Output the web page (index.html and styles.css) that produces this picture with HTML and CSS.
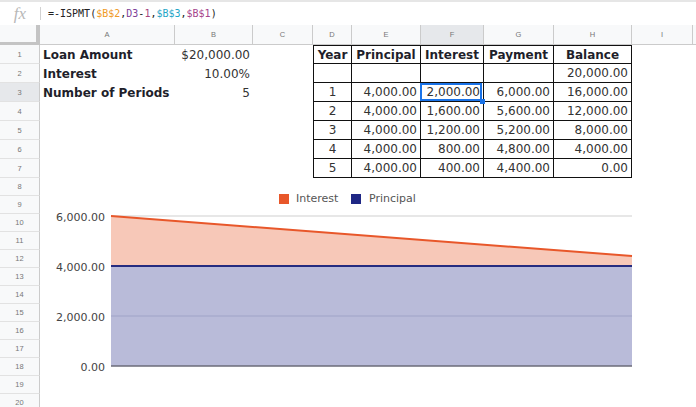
FILE: index.html
```html
<!DOCTYPE html>
<html>
<head>
<meta charset="utf-8">
<link rel="stylesheet" href="styles.css">
</head>
<body>
<div class="sheet">
  <div class="formula-bar">
    <div class="fx">fx</div>
    <div class="sep"></div>
    <div class="formula">=-ISPMT(<span class="ref1">$B$2</span>,<span class="ref2">D3</span>-<span class="num">1</span>,<span class="ref3">$B$3</span>,<span class="ref4">$B$1</span>)</div>
  </div>

  <div class="row head">
    <div class="corner"></div>
    <div>A</div><div>B</div><div>C</div><div>D</div><div>E</div>
    <div class="sel-h">F</div><div>G</div><div>H</div><div>I</div><div></div>
  </div>

  <div class="row">
    <div class="rh">1</div>
    <div class="b">Loan Amount</div>
    <div class="r">$20,000.00</div>
    <div></div>
    <div class="t first top b c">Year</div>
    <div class="t top b c">Principal</div>
    <div class="t top b c">Interest</div>
    <div class="t top b c">Payment</div>
    <div class="t top b c">Balance</div>
    <div></div><div></div>
  </div>

  <div class="row">
    <div class="rh">2</div>
    <div class="b">Interest</div>
    <div class="r">10.00%</div>
    <div></div>
    <div class="t first"></div>
    <div class="t"></div>
    <div class="t"></div>
    <div class="t"></div>
    <div class="t r">20,000.00</div>
    <div></div><div></div>
  </div>

  <div class="row">
    <div class="rh sel-h">3</div>
    <div class="b">Number of Periods</div>
    <div class="r">5</div>
    <div></div>
    <div class="t first c">1</div>
    <div class="t r">4,000.00</div>
    <div class="t r sel">2,000.00</div>
    <div class="t r">6,000.00</div>
    <div class="t r">16,000.00</div>
    <div></div><div></div>
  </div>

  <div class="row">
    <div class="rh">4</div>
    <div></div><div></div><div></div>
    <div class="t first c">2</div>
    <div class="t r">4,000.00</div>
    <div class="t r">1,600.00</div>
    <div class="t r">5,600.00</div>
    <div class="t r">12,000.00</div>
    <div></div><div></div>
  </div>

  <div class="row">
    <div class="rh">5</div>
    <div></div><div></div><div></div>
    <div class="t first c">3</div>
    <div class="t r">4,000.00</div>
    <div class="t r">1,200.00</div>
    <div class="t r">5,200.00</div>
    <div class="t r">8,000.00</div>
    <div></div><div></div>
  </div>

  <div class="row">
    <div class="rh">6</div>
    <div></div><div></div><div></div>
    <div class="t first c">4</div>
    <div class="t r">4,000.00</div>
    <div class="t r">800.00</div>
    <div class="t r">4,800.00</div>
    <div class="t r">4,000.00</div>
    <div></div><div></div>
  </div>

  <div class="row">
    <div class="rh">7</div>
    <div></div><div></div><div></div>
    <div class="t first c">5</div>
    <div class="t r">4,000.00</div>
    <div class="t r">400.00</div>
    <div class="t r">4,400.00</div>
    <div class="t r">0.00</div>
    <div></div><div></div>
  </div>

  <div class="row sm"><div class="rh">8</div></div>
  <div class="row sm"><div class="rh">9</div></div>
  <div class="row sm"><div class="rh">10</div></div>
  <div class="row sm"><div class="rh">11</div></div>
  <div class="row sm"><div class="rh">12</div></div>
  <div class="row sm"><div class="rh">13</div></div>
  <div class="row sm"><div class="rh">14</div></div>
  <div class="row sm"><div class="rh">15</div></div>
  <div class="row sm"><div class="rh">16</div></div>
  <div class="row sm"><div class="rh">17</div></div>
  <div class="row sm"><div class="rh">18</div></div>
  <div class="row sm"><div class="rh">19</div></div>
  <div class="row sm"><div class="rh">20</div></div>

  <div class="chart">
    <svg width="600" height="229" viewBox="0 0 600 229">
      <rect x="239" y="16" width="10" height="10" fill="#e8572a"/>
      <text x="256" y="23.5" class="legend">Interest</text>
      <rect x="311" y="16" width="10" height="10" fill="#1f2785"/>
      <text x="329" y="23.5" class="legend">Principal</text>

      <line x1="71" y1="38" x2="592" y2="38" stroke="#cfcfcf" stroke-width="1"/>
      <polygon points="71,38 592,78 592,88 71,88" fill="#f7c8b8"/>
      <rect x="71" y="88" width="521" height="100" fill="#b9bbd9"/>
      <line x1="71" y1="138" x2="592" y2="138" stroke="#a9abcd" stroke-width="1.5"/>
      <line x1="71" y1="38" x2="592" y2="78" stroke="#e8572a" stroke-width="2"/>
      <line x1="71" y1="88" x2="592" y2="88" stroke="#262c80" stroke-width="2"/>
      <line x1="71" y1="188" x2="592" y2="188" stroke="#6b6b78" stroke-width="1.5"/>

      <text x="65" y="42.5" class="axis" text-anchor="end">6,000.00</text>
      <text x="65" y="92.5" class="axis" text-anchor="end">4,000.00</text>
      <text x="65" y="142.5" class="axis" text-anchor="end">2,000.00</text>
      <text x="65" y="192.5" class="axis" text-anchor="end">0.00</text>
    </svg>
  </div>
</div>
</body>
</html>
```

FILE: styles.css
```css
* {
  box-sizing: border-box;
}

html,
body {
  margin: 0;
  padding: 0;
}

body {
  width: 696px;
  height: 407px;
  overflow: hidden;
  background: #ffffff;
  font-family: "DejaVu Sans", Verdana, sans-serif;
}

.sheet {
  position: relative;
  width: 696px;
  height: 407px;
  overflow: hidden;
}

/* formula bar */
.formula-bar {
  height: 25px;
  border-top: 2px solid #e6e6e6;
  display: flex;
  align-items: center;
}

.fx {
  width: 40px;
  text-align: center;
  font-family: "Liberation Serif", serif;
  font-style: italic;
  font-size: 17px;
  color: #b8b8b8;
}

.sep {
  width: 1px;
  height: 13px;
  background: #d2d2d2;
}

.formula {
  margin-left: 7px;
  font-family: "DejaVu Sans Mono", monospace;
  font-size: 10px;
  color: #222222;
}

.ref1 { color: #f09a26; }
.ref2 { color: #7e3f98; }
.num  { color: #a8457e; }
.ref3 { color: #1fa6c7; }
.ref4 { color: #a6458c; }

/* grid */
.row {
  display: grid;
  grid-template-columns: 40px 135px 78px 60px 39px 69px 63px 70px 78px 61px 3px;
  height: 19px;
}

.row.head {
  height: 20px;
}

.row.sm {
  height: 18px;
}

.row > div {
  display: flex;
  align-items: center;
  padding: 0 3px;
  font-size: 12px;
  color: #333333;
  white-space: nowrap;
  overflow: hidden;
}

.head > div {
  justify-content: center;
  background: #f8f9fa;
  border-right: 1px solid #cbcbcb;
  border-bottom: 1px solid #cbcbcb;
  font-family: "Liberation Sans", Arial, sans-serif;
  font-size: 7.5px;
  color: #777777;
}

.head > .corner {
  border-right: 4px solid #c4c4c4;
  border-bottom: 3px solid #c4c4c4;
}

.row > .rh {
  justify-content: center;
  background: #f8f9fa;
  border-right: 1px solid #cbcbcb;
  border-bottom: 1px solid #e2e2e2;
  font-family: "Liberation Sans", Arial, sans-serif;
  font-size: 7.5px;
  color: #777777;
}

.row > .sel-h {
  background: #e6e8eb;
}

.row > .b {
  font-weight: bold;
  color: #1f1f2b;
}

.row > .r {
  justify-content: flex-end;
}

.row > .c {
  justify-content: center;
  padding: 0;
}

.row > .t {
  border-right: 1px solid #111111;
  border-bottom: 1px solid #111111;
}

.row > .first {
  border-left: 1px solid #111111;
}

.row > .top {
  border-top: 1px solid #111111;
}

.row > .sel {
  position: relative;
  overflow: visible;
}

.sel::after {
  content: "";
  position: absolute;
  left: -1px;
  right: 1px;
  top: 0;
  bottom: 0;
  border: 2px solid #1a73e8;
}

.sel::before {
  content: "";
  position: absolute;
  right: -2px;
  bottom: -3px;
  width: 5px;
  height: 5px;
  background: #1a73e8;
  z-index: 2;
}

/* chart overlay */
.chart {
  position: absolute;
  left: 40px;
  top: 178px;
  width: 600px;
  height: 229px;
  background: #ffffff;
}

.chart svg {
  display: block;
}

.chart text {
  font-family: "DejaVu Sans", Verdana, sans-serif;
  font-size: 11px;
}

.chart .legend {
  fill: #555555;
}

.chart .axis {
  fill: #444444;
}
```
